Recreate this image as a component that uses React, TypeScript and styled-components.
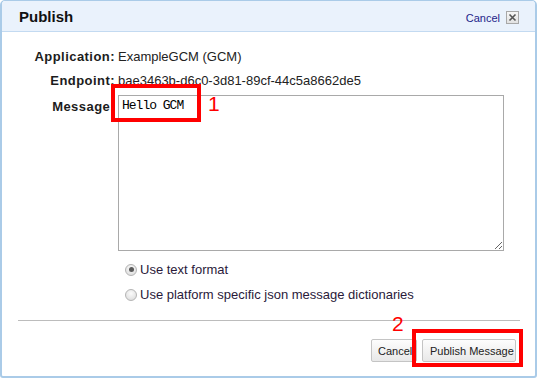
import React, { useState } from "react";
import styled, { createGlobalStyle } from "styled-components";

const GlobalStyle = createGlobalStyle`
    html, body {
        margin: 0;
        padding: 0;
        background: #ffffff;
    }
    body {
        font-family: "Liberation Sans", Arial, sans-serif;
    }
`;

const formats = [
    { id: "text", label: "Use text format" },
    { id: "json", label: "Use platform specific json message dictionaries" },
];

const App = () => {
    const [message, setMessage] = useState("Hello GCM");
    const [format, setFormat] = useState("text");

    return (
        <>
            <GlobalStyle />
            <Dialog>
                <Header>
                    <Title>Publish</Title>
                    <HeaderActions>
                        <CancelLink href="#">Cancel</CancelLink>
                        <CloseBox>
                            <svg width="9" height="9" viewBox="0 0 9 9">
                                <path d="M1.5 1.5 L7.5 7.5 M7.5 1.5 L1.5 7.5" stroke="#555" strokeWidth="1.6" />
                            </svg>
                        </CloseBox>
                    </HeaderActions>
                </Header>

                <Form onSubmit={(e) => e.preventDefault()}>
                    <Label>Application:</Label>
                    <Value>ExampleGCM (GCM)</Value>

                    <Label>Endpoint:</Label>
                    <Value>bae3463b-d6c0-3d81-89cf-44c5a8662de5</Value>

                    <Label $top>Message:</Label>
                    <MessageCell>
                        <MessageInput value={message} onChange={(e) => setMessage(e.target.value)} />
                        <MarkBox $left={-7} $top={-9} $width={90} $height={38} />
                        <MarkNumber style={{ left: 90, top: -1 }}>1</MarkNumber>
                    </MessageCell>

                    <span />
                    <RadioGroup>
                        {formats.map((f) => (
                            <RadioRow key={f.id} onClick={() => setFormat(f.id)}>
                                <RadioDot $checked={format === f.id} />
                                <span>{f.label}</span>
                            </RadioRow>
                        ))}
                    </RadioGroup>
                </Form>

                <Separator />

                <Footer>
                    <Button type="button" $narrow>Cancel</Button>
                    <Marked>
                        <Button type="button">Publish Message</Button>
                        <MarkBox $left={-10} $top={-10} $width={111} $height={38} />
                        <MarkNumber style={{ left: -30, top: -27 }}>2</MarkNumber>
                    </Marked>
                </Footer>
            </Dialog>
        </>
    );
};

export default App;

const Dialog = styled.div`
    box-sizing: border-box;
    width: 537px;
    height: 378px;
    border: 2px solid #aacbe8;
    border-top-width: 1px;
    border-radius: 5px 5px 3px 3px;
    background: #ffffff;
    overflow: hidden;
    color: #222222;
`;

const Header = styled.div`
    display: flex;
    align-items: center;
    justify-content: space-between;
    height: 30px;
    padding: 0 16px 0 17px;
    background: #eaf2fc;
    border-bottom: 1px solid #c3daf1;
`;

const Title = styled.div`
    font-size: 15px;
    font-weight: bold;
    color: #111111;
    padding-top: 1px;
`;

const HeaderActions = styled.div`
    display: flex;
    align-items: center;
    gap: 6px;
    padding-top: 3px;
`;

const CancelLink = styled.a`
    font-size: 11px;
    color: #24248a;
    text-decoration: none;
`;

const CloseBox = styled.span`
    display: flex;
    align-items: center;
    justify-content: center;
    box-sizing: border-box;
    width: 13px;
    height: 13px;
    border: 1px solid #a8a8a8;
    background: linear-gradient(#f6f6f6, #e2e2e2);
`;

const Form = styled.form`
    display: grid;
    grid-template-columns: 114px 386px;
    grid-template-rows: 24px 24px auto auto;
    column-gap: 2px;
    margin: 0;
    padding-top: 13px;
    font-size: 13px;
`;

const Label = styled.div<{ $top?: boolean }>`
    text-align: right;
    font-weight: bold;
    letter-spacing: 0.45px;
    color: #1c1c1c;
    line-height: ${(p) => (p.$top ? "16px" : "24px")};
    padding-top: ${(p) => (p.$top ? "6px" : "0")};
    padding-right: 1px;
`;

const Value = styled.div`
    line-height: 24px;
    color: #222222;
`;

const MessageCell = styled.div`
    position: relative;
    padding-top: 2px;
`;

const MessageInput = styled.textarea`
    display: block;
    box-sizing: border-box;
    width: 386px;
    height: 156px;
    margin: 0;
    padding: 2px 3px;
    border: 1px solid #a9a9a9;
    font-family: "Liberation Mono", "Courier New", monospace;
    font-size: 13px;
    letter-spacing: -1px;
    line-height: 16px;
    color: #000000;
    resize: both;
    outline: none;
`;

const MarkBox = styled.div<{ $left: number; $top: number; $width: number; $height: number }>`
    position: absolute;
    box-sizing: border-box;
    left: ${(p) => p.$left}px;
    top: ${(p) => p.$top}px;
    width: ${(p) => p.$width}px;
    height: ${(p) => p.$height}px;
    border: 4px solid #ff0000;
    pointer-events: none;
`;

const MarkNumber = styled.span`
    position: absolute;
    font-family: "Liberation Sans", Arial, sans-serif;
    font-size: 21px;
    line-height: 24px;
    color: #ff0000;
    pointer-events: none;
`;

const RadioGroup = styled.div`
    display: flex;
    flex-direction: column;
    margin-top: 6px;
    padding-left: 7px;
`;

const RadioRow = styled.label`
    display: flex;
    align-items: center;
    gap: 3px;
    height: 25px;
    color: #2a1a3a;
    cursor: pointer;
`;

const RadioDot = styled.span<{ $checked: boolean }>`
    position: relative;
    box-sizing: border-box;
    width: 12px;
    height: 12px;
    border-radius: 50%;
    border: 1px solid #b4b4b4;
    background: radial-gradient(circle at 50% 35%, #fbfbfb, #d8d8d8);

    &::after {
        content: "";
        display: ${(p) => (p.$checked ? "block" : "none")};
        position: absolute;
        left: 2.5px;
        top: 2.5px;
        width: 5px;
        height: 5px;
        border-radius: 50%;
        background: #5a5a5a;
    }
`;

const Separator = styled.hr`
    margin: 13px 15px 0 16px;
    border: none;
    border-top: 1px solid #bcbcbc;
    height: 0;
`;

const Footer = styled.div`
    display: flex;
    justify-content: flex-end;
    gap: 5px;
    padding: 18px 19px 0 0;
`;

const Marked = styled.span`
    position: relative;
    display: inline-flex;
`;

const Button = styled.button<{ $narrow?: boolean }>`
    box-sizing: border-box;
    height: 23px;
    padding: 0 ${(p) => (p.$narrow ? "5px 0 6px" : "5px 0 7px")};
    width: ${(p) => (p.$narrow ? "46px" : "94px")};
    text-align: left;
    border: 1px solid #c4c4c4;
    border-radius: 2px;
    background: linear-gradient(#fdfdfd, #e8e8e8);
    font-family: "Liberation Sans", Arial, sans-serif;
    font-size: 11px;
    color: #222222;
    white-space: nowrap;
    overflow: hidden;
`;
